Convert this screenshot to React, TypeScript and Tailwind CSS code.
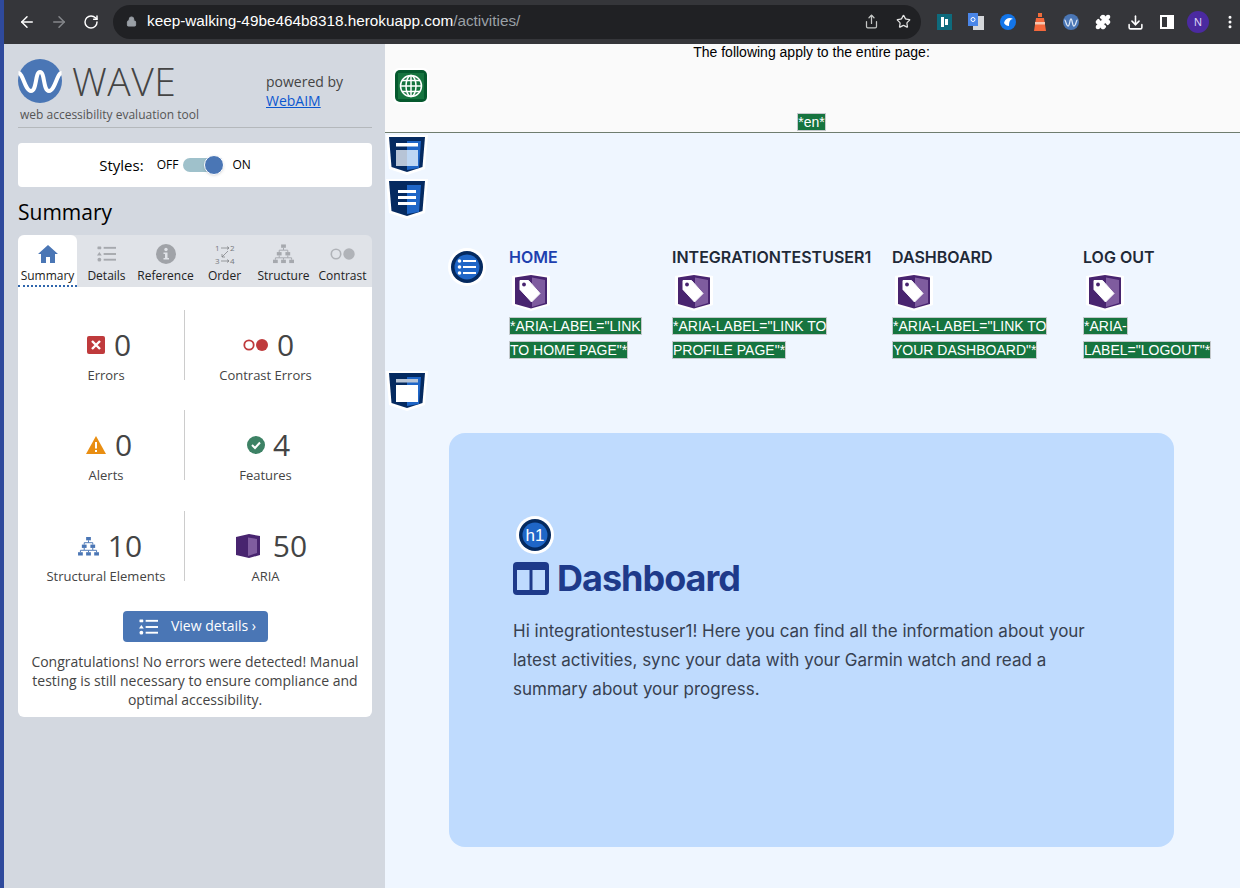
import React from 'react';
import { ArrowLeft, ArrowRight, RotateCw, Lock, Share, Star, Puzzle, Download, MoreVertical } from 'lucide-react';

const Shield: React.FC<{ kind: 'header' | 'text' | 'window' }> = ({ kind }) => (
  <svg width="42" height="40" viewBox="0 0 42 40" className="block">
    <path d="M0 0H42L39 34L21 40L3 34Z" fill="#fff" />
    <g transform="translate(2 1)">
      <path d="M1 1H37L34.500 31L19 36L3.500 31Z" fill="#052a60" />
      <path d="M19 5H33L31 32L19 34Z" fill="#1f66c7" />
      {kind === 'header' && (
        <>
          <rect x="8" y="7" width="22" height="3.500" fill="#fff" />
          <rect x="8" y="14" width="11" height="16" fill="#b7c4d6" />
          <rect x="19" y="14" width="11" height="16" fill="#bdd6f3" />
        </>
      )}
      {kind === 'text' && (
        <>
          <rect x="10" y="10" width="18" height="3" fill="#fff" />
          <rect x="10" y="16" width="18" height="3" fill="#fff" />
          <rect x="10" y="22" width="18" height="3" fill="#fff" />
        </>
      )}
      {kind === 'window' && (
        <>
          <rect x="8" y="7" width="22" height="3.500" fill="#b7c4d6" />
          <rect x="8" y="13" width="22" height="17" fill="#fff" />
        </>
      )}
    </g>
  </svg>
);

const AriaIcon: React.FC = () => (
  <svg width="38" height="38" viewBox="0 0 38 38" className="block">
    <path d="M0 3L19 0L38 3V32L19 38L0 32Z" fill="#fff" />
    <path d="M3 4.500L19 2L35 4.500V31L19 35.500L3 31Z" fill="#48246f" />
    <path d="M20 4.500L33 7V30L20 34Z" fill="#7f5c9f" />
    <path d="M8 7.500H16.500L28 20.500L19.500 29L8 16.500Z" fill="#fff" stroke="#fff" strokeLinejoin="round" />
    <circle cx="12" cy="11.500" r="1.900" fill="#48246f" />
  </svg>
);

const DetailsGlyph: React.FC<{ color: string; className?: string }> = ({ color, className }) => (
  <svg viewBox="0 0 20 16" className={className} fill={color}>
    <rect x="0.500" y="0" width="4" height="3" rx="0.500" />
    <path d="M2.500 6L5 9.500H0Z" />
    <circle cx="2.500" cy="14" r="2" />
    <rect x="7" y="0.500" width="13" height="2" />
    <rect x="7" y="7" width="13" height="2" />
    <rect x="7" y="13" width="13" height="2" />
  </svg>
);

const HierarchyGlyph: React.FC<{ color: string; className?: string }> = ({ color, className }) => (
  <svg viewBox="0 0 22 20" className={className}>
    <g fill={color}>
      <rect x="8.500" y="0" width="5" height="3.500" />
      <rect x="4" y="8" width="5" height="3.500" />
      <rect x="13" y="8" width="5" height="3.500" />
      <rect x="0" y="16" width="5" height="3.500" />
      <rect x="8.500" y="16" width="5" height="3.500" />
      <rect x="17" y="16" width="5" height="3.500" />
    </g>
    <path d="M11 3.500V6H6.500V8M11 6H15.500V8M6.500 11.500V14H2.500V16M6.500 14H11V16M15.500 11.500V14H19.500V16M15.500 14H11" stroke={color} fill="none" />
  </svg>
);

const tabs = [
  { label: 'Summary', active: true },
  { label: 'Details' },
  { label: 'Reference' },
  { label: 'Order' },
  { label: 'Structure' },
  { label: 'Contrast' },
];

const TabIcon: React.FC<{ label: string }> = ({ label }) => {
  if (label === 'Summary') {
    return (
      <svg width="20" height="18" viewBox="0 0 20 18" fill="#4a76b5">
        <path d="M10 0L20 9H17V18H12V12H8V18H3V9H0Z" />
      </svg>
    );
  }
  if (label === 'Details') return <DetailsGlyph color="#a6a9ae" className="w-[19px] h-[16px]" />;
  if (label === 'Reference') {
    return (
      <svg width="20" height="20" viewBox="0 0 20 20">
        <circle cx="10" cy="10" r="10" fill="#a0a3a8" />
        <circle cx="10" cy="5.500" r="1.700" fill="#e0e3e8" />
        <path d="M7.500 8.500H11.500V14H13V15.500H7.500V14H9V10H7.500Z" fill="#e0e3e8" />
      </svg>
    );
  }
  if (label === 'Order') {
    return (
      <svg width="22" height="24" viewBox="-1 -2 22 24" fontSize="8" fill="#77797d" fontFamily="Open Sans">
        <text x="0" y="6.500">1</text>
        <text x="15" y="6.500">2</text>
        <text x="0" y="19.500">3</text>
        <text x="15" y="19.500">4</text>
        <g stroke="#77797d" strokeWidth="0.700" fill="none">
          <path d="M6 4H14M12 2.500L14 4L12 5.500" />
          <path d="M6 17H14M12 15.500L14 17L12 18.500" />
          <path d="M13 7L7 13M7 10V13H10" />
        </g>
      </svg>
    );
  }
  if (label === 'Structure') return <HierarchyGlyph color="#a6a9ae" className="w-[21px] h-[20px]" />;
  return (
    <svg width="25" height="12" viewBox="0 0 25 12">
      <circle cx="6" cy="6" r="4.700" fill="none" stroke="#b0b3b8" strokeWidth="1.600" />
      <circle cx="19" cy="6" r="5.700" fill="#b0b3b8" />
    </svg>
  );
};

const Stat: React.FC<{ icon: React.ReactNode; count: string; label: string; row: string }> = ({ icon, count, label, row }) => (
  <div className="flex flex-col items-center">
    <div className={`flex items-center h-[40px] ${row}`}>
      {icon}
      <span className="text-[30px] leading-none text-[#444]">{count}</span>
    </div>
    <div className="text-[13px] leading-[18px] text-[#444] mt-[1px] whitespace-nowrap">{label}</div>
  </div>
);

const Tag: React.FC<{ children: React.ReactNode }> = ({ children }) => (
  <span
    className="bg-[#16743f] text-white border border-[#c4c9cc] text-[14px]"
    style={{ boxDecorationBreak: 'clone', WebkitBoxDecorationBreak: 'clone' }}
  >
    {children}
  </span>
);

const navItems = [
  { label: 'HOME', tag: '*ARIA-LABEL="LINK TO HOME PAGE"*', width: 'w-[163px]', tagWidth: 'w-[140px]', color: 'text-[#1e40af]' },
  { label: 'INTEGRATIONTESTUSER1', tag: '*ARIA-LABEL="LINK TO PROFILE PAGE"*', width: 'w-[220px]', tagWidth: 'w-[170px]', color: 'text-[#1f2937]' },
  { label: 'DASHBOARD', tag: '*ARIA-LABEL="LINK TO YOUR DASHBOARD"*', width: 'w-[191px]', tagWidth: 'w-[170px]', color: 'text-[#1f2937]' },
  { label: 'LOG OUT', tag: '*ARIA-LABEL="LOGOUT"*', width: 'w-[128px]', tagWidth: 'w-[128px]', color: 'text-[#1f2937]' },
];

const Toolbar: React.FC = () => (
  <div className="h-[44px] bg-[#35363a] flex items-center pl-[14px] shrink-0">
    <ArrowLeft size={18} color="#fff" strokeWidth={2} />
    <ArrowRight size={18} color="#85878b" strokeWidth={2} className="ml-[14px]" />
    <RotateCw size={16} color="#fff" strokeWidth={2.200} className="ml-[15px]" />
    <div className="ml-[14px] w-[808px] h-[34px] rounded-full bg-[#202124] flex items-center pl-[13px] pr-[10px] mt-[-1px]">
      <Lock size={11} color="#9aa0a6" fill="#9aa0a6" />
      <div className="ml-[10px] text-[15.300px] font-['Liberation_Sans'] text-white whitespace-nowrap">
        keep-walking-49be464b8318.herokuapp.com<span className="text-[#9aa0a6]">/activities/</span>
      </div>
      <Share size={15} color="#c4c7c5" className="ml-auto" />
      <Star size={15} color="#e3e3e3" className="ml-[17px]" />
    </div>
    <div className="ml-[16px] w-[15px] h-[16px] bg-[#0e6b7d] flex items-center justify-center gap-[1px]">
      <span className="w-[3px] h-[10px] bg-white" />
      <span className="w-[3px] h-[6px] bg-white" />
    </div>
    <svg width="16" height="18" viewBox="0 0 16 18" className="ml-[16px]">
      <rect x="5" y="3" width="11" height="14" fill="#d5d7da" />
      <rect x="0" y="0" width="10" height="13" fill="#4a86e8" />
      <circle cx="5" cy="6.500" r="2" fill="none" stroke="#fff" strokeWidth="1" />
    </svg>
    <svg width="16" height="16" viewBox="0 0 16 16" className="ml-[16px]">
      <circle cx="8" cy="8" r="8" fill="#1375e8" />
      <path d="M4 9C5 4 10 3 13 5C10 5 9 8 9 12C7 12 5 11 4 9Z" fill="#fff" />
    </svg>
    <svg width="14" height="18" viewBox="0 0 14 18" className="ml-[17px]">
      <rect x="5" y="0" width="4" height="4" fill="#ef6c3a" />
      <path d="M3 5H11L13 18H1Z" fill="#f4683c" />
      <rect x="2" y="9" width="10" height="2.500" fill="#f6c6b0" />
    </svg>
    <svg width="16" height="16" viewBox="0 0 16 16" className="ml-[16px]">
      <circle cx="8" cy="8" r="8" fill="#4a76b5" />
      <path d="M1.500 6C3 6 3 12 5 12C7 12 6.500 5 8 5C9.500 5 9 12 11 12C13 12 13 6 14.500 6" stroke="#dbe6f5" strokeWidth="1.300" fill="none" />
    </svg>
    <Puzzle size={16} color="#fff" fill="#fff" className="ml-[16px]" />
    <Download size={17} color="#fff" strokeWidth={2.200} className="ml-[16px]" />
    <div className="ml-[16px] w-[14px] h-[14px] border-2 border-white flex justify-end">
      <span className="w-[5px] bg-white" />
    </div>
    <div className="ml-[13px] w-[22px] h-[22px] rounded-full bg-[#4b2aa0] text-[#dcd5f5] text-[11px] font-['Liberation_Sans'] flex items-center justify-center">N</div>
    <MoreVertical size={16} color="#fff" strokeWidth={2.500} className="ml-[13px]" />
  </div>
);

const Sidebar: React.FC = () => (
  <aside className="w-[381px] shrink-0 bg-[#d3d8e0] pl-[14px] pr-[13px] font-['Open_Sans',sans-serif] text-[#444]">
    <div className="flex h-[84px] border-b border-[#b4b8bc] pt-[15px]">
      <div className="w-[248px]">
        <div className="flex items-center gap-[10px]">
          <svg width="44" height="44" viewBox="0 0 44 44">
            <circle cx="22" cy="22" r="22" fill="#4a76b5" />
            <path d="M0.500 14C5 14 7 32 13 32C19 32 17 13 22 13C27 13 25 32 31 32C37 32 39 14 43.500 14" fill="none" stroke="#fff" strokeWidth="4" />
          </svg>
          <span className="text-[39px] leading-[44px] font-light text-[#444] tracking-[0.500px]">WAVE</span>
        </div>
        <div className="text-[12px] leading-[17px] mt-[3px] ml-[2px] text-[#555] whitespace-nowrap">web accessibility evaluation tool</div>
      </div>
      <div className="text-[14px] leading-[19px] pt-[13px]">
        <div>powered by</div>
        <div className="text-[#0b57d0] underline">WebAIM</div>
      </div>
    </div>

    <div className="mt-[15px] h-[44px] bg-white rounded-[4px] flex items-center justify-center text-black pr-[40px]">
      <span className="text-[15px]">Styles:</span>
      <span className="text-[12px] ml-[13px]">OFF</span>
      <span className="relative w-[38px] h-[14px] rounded-full bg-[#9fc1cb] ml-[5px]">
        <span className="absolute right-[-3px] top-[-3px] w-[20px] h-[20px] rounded-full bg-[#4a76b5] border border-white shadow" />
      </span>
      <span className="text-[12px] ml-[11px]">ON</span>
    </div>

    <h2 className="text-[21px] leading-[30px] text-black mt-[10px]">Summary</h2>

    <div className="mt-[8px] h-[52px] bg-[#e0e3e8] rounded-t-[6px] flex">
      {tabs.map(t => (
        <div
          key={t.label}
          className={
            t.active
              ? 'w-[59px] bg-white rounded-t-[6px] border-b-2 border-dotted border-[#2f66ad] flex flex-col items-center'
              : 'flex-1 flex flex-col items-center'
          }
        >
          <div className="h-[26px] mt-[6px] flex items-center justify-center"><TabIcon label={t.label} /></div>
          <div className="text-[12px] leading-[16px] text-[#222] whitespace-nowrap mt-[1px]">{t.label}</div>
        </div>
      ))}
    </div>

    <div className="h-[430px] bg-white rounded-b-[6px]">
      <div className="pt-[23px] pl-[10px] grid grid-cols-[157px_161px]">
        <div className="h-[70px] border-r border-[#ccc] pt-[15px]">
          <Stat
            label="Errors"
            count="0"
            row="gap-[9px] pl-[6px]"
            icon={
              <svg width="18" height="18" viewBox="0 0 18 18">
                <rect width="18" height="18" rx="2" fill="#bf3a3c" />
                <path d="M5 5L13 13M13 5L5 13" stroke="#fff" strokeWidth="2.400" />
              </svg>
            }
          />
        </div>
        <div className="h-[70px] pt-[15px]">
          <Stat
            label="Contrast Errors"
            count="0"
            row="gap-[9px] pl-[6px]"
            icon={
              <svg width="25" height="12" viewBox="0 0 25 12">
                <circle cx="6" cy="6" r="4.700" fill="none" stroke="#bf3a3c" strokeWidth="1.800" />
                <circle cx="19" cy="6" r="6" fill="#bf3a3c" />
              </svg>
            }
          />
        </div>
        <div className="h-[70px] mt-[30px] border-r border-[#ccc] pt-[15px]">
          <Stat
            label="Alerts"
            count="0"
            row="gap-[9px] pl-[6px]"
            icon={
              <svg width="20" height="18" viewBox="0 0 20 18">
                <path d="M10 0L20 18H0Z" fill="#e98e12" />
                <rect x="9" y="6" width="2" height="6.500" fill="#fff" />
                <rect x="9" y="14" width="2" height="2" fill="#fff" />
              </svg>
            }
          />
        </div>
        <div className="h-[70px] mt-[30px] pt-[15px]">
          <Stat
            label="Features"
            count="4"
            row="gap-[8px] pl-[6px]"
            icon={
              <svg width="18" height="18" viewBox="0 0 18 18">
                <circle cx="9" cy="9" r="9" fill="#3d8265" />
                <path d="M5 9L8 12L13 6.500" stroke="#fff" strokeWidth="2" fill="none" />
              </svg>
            }
          />
        </div>
        <div className="h-[70px] mt-[31px] border-r border-[#ccc] pt-[15px]">
          <Stat
            label="Structural Elements"
            count="10"
            row="gap-[9px] pl-[8px]"
            icon={<HierarchyGlyph color="#4a76b5" className="w-[21px] h-[19px]" />}
          />
        </div>
        <div className="h-[70px] mt-[31px] pt-[15px]">
          <Stat
            label="ARIA"
            count="50"
            row="gap-[13px] pl-[12px]"
            icon={
              <svg width="24" height="24" viewBox="0 0 24 24">
                <path d="M0 3L13 0L24 2V21L13 24L0 21Z" fill="#48246f" />
                <path d="M12 3.500L21 5V19L12 22Z" fill="#7f5c9f" />
              </svg>
            }
          />
        </div>
      </div>

      <div className="mt-[30px] mx-auto w-[145px] h-[31px] bg-[#4a76b5] rounded-[4px] flex items-center justify-center gap-[13px] text-white text-[14px] pl-[5px]">
        <DetailsGlyph color="#fff" className="w-[19px] h-[16px]" />
        <span className="mt-[-2px]">View details ›</span>
      </div>

      <p className="mt-[10px] px-[6px] text-[14px] leading-[19px] text-center text-[#444]">
        Congratulations! No errors were detected! Manual testing is still necessary to ensure compliance and optimal accessibility.
      </p>
    </div>
  </aside>
);

export default function App() {
  return (
    <div className="w-[1240px] h-[888px] overflow-hidden flex bg-[#eff6ff]">
      <div className="w-[4px] shrink-0 bg-[#2f4a9c]" />
      <div className="flex-1 flex flex-col min-w-0">
        <Toolbar />
        <div className="flex flex-1 min-h-0">
          <Sidebar />
          <main className="flex-1 min-w-0 flex flex-col font-['Inter',sans-serif]">
            <div className="h-[89px] shrink-0 bg-[#fafafa] border-b border-[#6f7d6f] relative font-['Liberation_Sans'] pr-[2px]">
              <p className="text-center text-[14px] leading-[16px] text-black">The following apply to the entire page:</p>
              <svg width="36" height="36" viewBox="0 0 36 36" className="absolute left-[8px] top-[24px]">
                <rect width="36" height="36" rx="6" fill="#fff" />
                <rect x="2" y="2" width="32" height="32" rx="5" fill="#05592e" />
                <rect x="5" y="5" width="26" height="26" fill="#16743f" />
                <g fill="none" stroke="#fff" strokeWidth="1.500">
                  <circle cx="18" cy="18" r="10.500" />
                  <ellipse cx="18" cy="18" rx="5" ry="10.500" />
                  <path d="M18 7.500V28.500M7.500 18H28.500M9 12.500H27M9 23.500H27" />
                </g>
              </svg>
              <div className="absolute bottom-[2px] left-0 right-[2px] text-center text-[14px] leading-[16px]">
                <span className="bg-[#16743f] text-white border border-[#c4c9cc]">*en*</span>
              </div>
            </div>

            <div className="pl-[1px] mt-[2px]"><Shield kind="header" /></div>
            <div className="pl-[1px] mt-[4px]"><Shield kind="text" /></div>

            <div className="flex pl-[63px] mt-[28px] h-[124px] shrink-0">
              <svg width="38" height="38" viewBox="0 0 38 38" className="shrink-0 mt-[1px]">
                <circle cx="19" cy="19" r="19" fill="#fff" />
                <circle cx="19" cy="19" r="16" fill="#052a60" />
                <circle cx="19" cy="19" r="12.500" fill="#1f66c7" />
                <g fill="#fff">
                  <circle cx="11.500" cy="13" r="1.800" />
                  <circle cx="11.500" cy="19" r="1.800" />
                  <circle cx="11.500" cy="25" r="1.800" />
                  <rect x="15" y="12" width="13" height="2" />
                  <rect x="15" y="18" width="13" height="2" />
                  <rect x="15" y="24" width="13" height="2" />
                </g>
              </svg>
              <div className="flex ml-[23px]">
                {navItems.map(n => (
                  <div key={n.label} className={n.width}>
                    <div className={`text-[16px] leading-[20px] font-semibold ${n.color}`}>{n.label}</div>
                    <div className="ml-[3px] mt-[6px]"><AriaIcon /></div>
                    <div className={`mt-[3px] leading-[24px] font-['Liberation_Sans'] text-[14px] ${n.tagWidth}`}><Tag>{n.tag}</Tag></div>
                  </div>
                ))}
              </div>
            </div>

            <div className="pl-[1px]"><Shield kind="window" /></div>

            <section className="ml-[64px] mt-[22px] w-[725px] h-[414px] rounded-2xl bg-[#bfdbfe] px-[64px] pt-[83px] shrink-0">
              <svg width="38" height="38" viewBox="0 0 38 38" className="block ml-[3px]">
                <circle cx="19" cy="19" r="19" fill="#fff" />
                <circle cx="19" cy="19" r="16" fill="#052a60" />
                <circle cx="19" cy="19" r="12.500" fill="#1f66c7" />
                <text x="19" y="25" textAnchor="middle" fontSize="17" fill="#fff" fontFamily="Liberation Sans">h1</text>
              </svg>
              <div className="flex items-center gap-[8px] mt-[4px]">
                <svg width="36" height="33" viewBox="0 0 36 33">
                  <rect width="36" height="33" rx="4" fill="#1e3a8a" />
                  <rect x="4" y="8" width="12.500" height="20" fill="#bfdbfe" />
                  <rect x="19.500" y="8" width="12.500" height="20" fill="#bfdbfe" />
                </svg>
                <h1 className="text-[36px] leading-[40px] font-bold text-[#1e3a8a] tracking-[-1px]">Dashboard</h1>
              </div>
              <p className="mt-[19px] text-[17px] leading-[29px] text-[#374151]">
                Hi integrationtestuser1! Here you can find all the information about your latest activities, sync your data with your Garmin watch and read a summary about your progress.
              </p>
            </section>
          </main>
        </div>
      </div>
    </div>
  );
}
